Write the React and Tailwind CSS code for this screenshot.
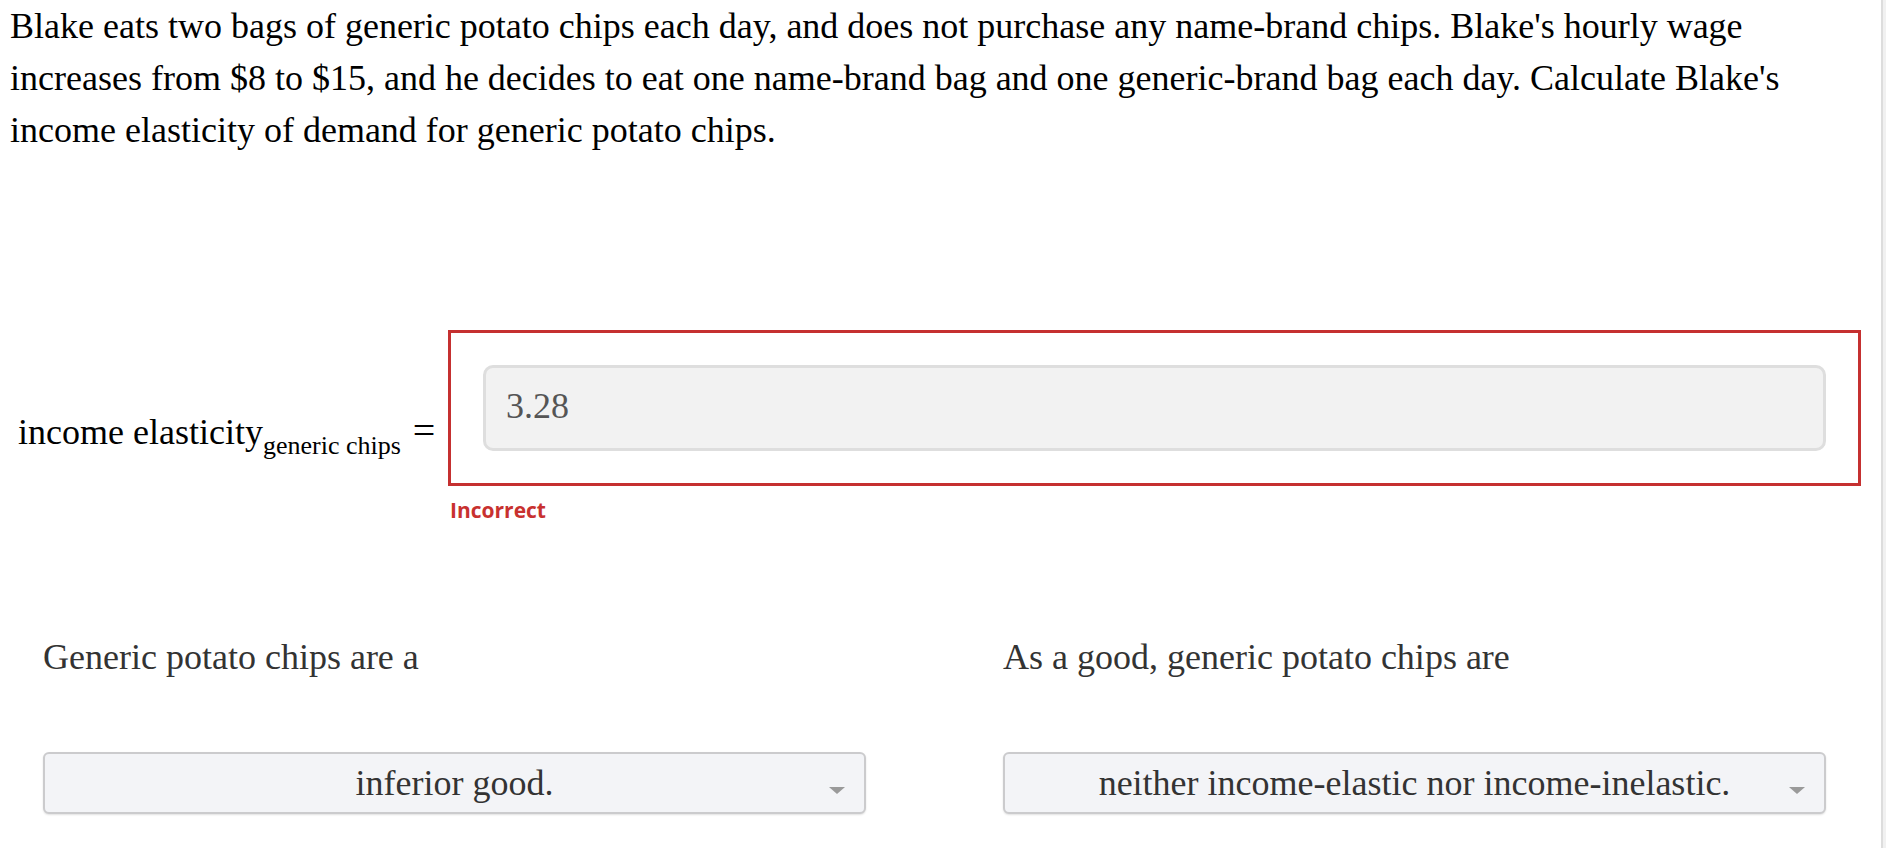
import React from 'react';

const serif = "font-['Liberation_Serif','Times_New_Roman',serif]";

const Dropdown = ({ value }) => (
  <div className="relative flex h-[62px] w-[823px] items-center justify-center rounded-[6px] border-2 border-[#cbcbcd] bg-[#f3f4f7] shadow-[0_1px_2px_rgba(0,0,0,0.12)]">
    <span className="text-[36px] leading-[40px] text-[#333]">{value}</span>
    <span className="absolute right-[19px] top-[33px] h-0 w-0 border-x-[8px] border-t-[7px] border-x-transparent border-t-[#9a9a9a]" />
  </div>
);

export default function App() {
  return (
    <div className={`flex min-h-[848px] bg-white ${serif}`}>
      <div className="w-[1881px] flex-none">
        <p className="pl-[10px] pr-[60px] text-[36px] leading-[52px] text-black">
          Blake eats two bags of generic potato chips each day, and does not purchase any name-brand chips. Blake's hourly wage
          increases from $8 to $15, and he decides to eat one name-brand bag and one generic-brand bag each day. Calculate Blake's
          income elasticity of demand for generic potato chips.
        </p>

        <div className="mt-[174px] flex items-start">
          <div className="w-[448px] flex-none pl-[18px] pt-[81px] text-[36px] leading-[40px] text-black whitespace-nowrap">
            <span>income elasticity</span>
            <span className="align-[-10px] text-[26px]">generic chips</span>
            <span className="ml-[12px] text-[40px]">=</span>
          </div>
          <div className="flex-none">
            <div className="w-[1413px] border-[3px] border-[#c53030] p-[32px]">
              <div className="flex h-[86px] items-center rounded-[10px] border-[3px] border-[#dedede] bg-[#f2f2f2] pb-[4px] pl-[20px] text-[36px] text-[#555]">
                3.28
              </div>
            </div>
            <div className="ml-[2px] mt-[11px] font-['Open_Sans',sans-serif] text-[21px] font-bold leading-[27px] text-[#c8312f]">
              Incorrect
            </div>
          </div>
        </div>

        <div className="mt-[107px] grid grid-cols-[823px_823px] gap-x-[137px] pl-[43px]">
          <div>
            <div className="text-[36px] leading-[52px] text-[#333]">Generic potato chips are a</div>
            <div className="mt-[69px]">
              <Dropdown value="inferior good." />
            </div>
          </div>
          <div>
            <div className="text-[36px] leading-[52px] text-[#333]">As a good, generic potato chips are</div>
            <div className="mt-[69px]">
              <Dropdown value="neither income-elastic nor income-inelastic." />
            </div>
          </div>
        </div>
      </div>
      <div className="w-[5px] flex-none border-l-2 border-[#dddddd] bg-[#f1f1f1]" />
    </div>
  );
}
